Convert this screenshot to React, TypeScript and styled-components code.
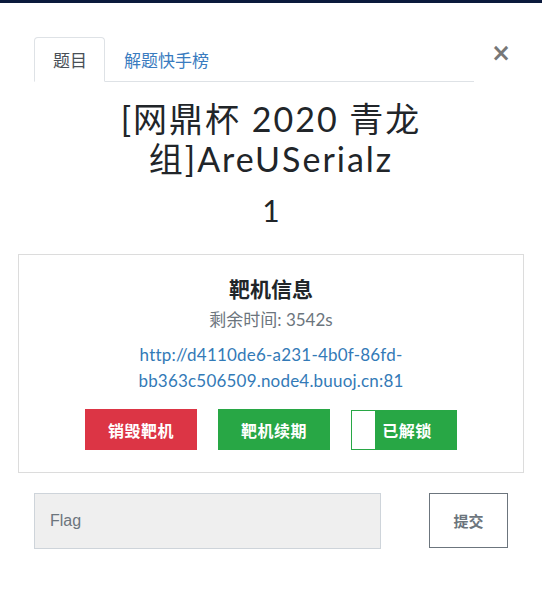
import React from "react";
import styled, { createGlobalStyle } from "styled-components";

const Global = createGlobalStyle`
  html, body { margin: 0; padding: 0; background: #fff; }
  body { font-family: Lato, "Noto Sans CJK SC", sans-serif; color: #212529; }
  * { box-sizing: border-box; }
`;

const TopStrip = styled.div`
  height: 3px;
  background: #0b1a3c;
`;

const Modal = styled.div`
  padding: 34px 18px 40px;
`;

const Header = styled.div`
  display: flex;
  align-items: flex-start;
  padding-left: 16px;
`;

const TabList = styled.div`
  display: flex;
  width: 440px;
  border-bottom: 1px solid #dee2e6;
`;

const Tab = styled.div<{ $active?: boolean }>`
  height: 45px;
  margin-bottom: -1px;
  padding: 0 17px 0 18px;
  display: flex;
  align-items: center;
  font-family: "Noto Sans CJK SC", sans-serif;
  font-size: 17px;
  color: ${(p) => (p.$active ? "#495057" : "#3a7cc0")};
  background: ${(p) => (p.$active ? "#fff" : "transparent")};
  border: 1px solid ${(p) => (p.$active ? "#dee2e6" : "transparent")};
  border-bottom-color: ${(p) => (p.$active ? "#fff" : "transparent")};
  border-radius: 4px 4px 0 0;
`;

const Close = styled.div`
  margin-left: 17px;
  margin-top: 2px;
  font-family: "DejaVu Sans", sans-serif;
  font-size: 24px;
  font-weight: bold;
  color: #777;
  line-height: 28px;
`;

const Title = styled.h3`
  margin: 17px 30px 0;
  text-align: center;
  font-family: Lato, "Noto Sans CJK SC", sans-serif;
  font-weight: 400;
  font-size: 34px;
  line-height: 40px;
  letter-spacing: 2px;
  color: #212529;
`;

const Score = styled.h4`
  margin: 11px 0 0;
  text-align: center;
  font-family: Lato, sans-serif;
  font-weight: 400;
  font-size: 30px;
  line-height: 40px;
  color: #212529;
`;

const Card = styled.div`
  margin-top: 24px;
  border: 1px solid #dcdcdc;
  padding: 20px 16px 22px;
  display: flex;
  flex-direction: column;
  align-items: center;
`;

const CardTitle = styled.div`
  font-family: Lato, "Noto Sans CJK SC", sans-serif;
  font-weight: 700;
  font-size: 21px;
  line-height: 28px;
  color: #212529;
`;

const Timer = styled.div`
  font-size: 17px;
  line-height: 24px;
  color: #6c757d;
  margin-top: 5px;
`;

const Link = styled.a`
  margin-top: 10px;
  display: block;
  width: 300px;
  text-align: center;
  font-size: 17px;
  line-height: 26px;
  letter-spacing: 0.2px;
  color: #337ab7;
  text-decoration: none;
`;

const Buttons = styled.div`
  margin-top: 15px;
  display: flex;
  align-items: center;
  gap: 21px;
`;

const Btn = styled.button<{ $color: string }>`
  height: 41px;
  width: 112px;
  border: none;
  background: ${(p) => p.$color};
  color: #fff;
  font-family: "Noto Sans CJK SC", sans-serif;
  font-weight: 700;
  font-size: 16px;
  letter-spacing: 0.5px;
  padding: 0;
`;

const Toggle = styled.div`
  position: relative;
  height: 40px;
  width: 106px;
  border: 1px solid #28a745;
  background: #28a745;
  display: flex;
  align-items: center;
  justify-content: center;
`;

const Knob = styled.div`
  position: absolute;
  left: 0;
  top: 0;
  bottom: 0;
  width: 23px;
  background: #fff;
`;

const ToggleLabel = styled.span`
  padding-left: 6px;
  color: #fff;
  font-family: "Noto Sans CJK SC", sans-serif;
  font-weight: 700;
  font-size: 16px;
  letter-spacing: 0.5px;
`;

const FlagRow = styled.div`
  margin-top: 20px;
  padding: 0 16px;
  display: flex;
  align-items: flex-start;
`;

const FlagInput = styled.input`
  width: 347px;
  height: 56px;
  background: #efefef;
  border: 1px solid #ced4da;
  padding: 0 15px;
  font-family: "Liberation Sans", Arial, sans-serif;
  font-size: 16px;
  color: #495057;
  outline: none;
  &::placeholder { color: #6c757d; }
`;

const Submit = styled.button`
  margin-left: auto;
  width: 79px;
  height: 55px;
  background: #fff;
  border: 1px solid #6c757d;
  color: #6c757d;
  font-family: "Noto Sans CJK SC", sans-serif;
  font-weight: 700;
  font-size: 15px;
  padding: 0;
`;

export default function App() {
  return (
    <>
      <Global />
      <TopStrip />
      <Modal>
        <Header>
          <TabList>
            <Tab $active>题目</Tab>
            <Tab>解题快手榜</Tab>
          </TabList>
          <Close>×</Close>
        </Header>
        <Title>[网鼎杯 2020 青龙组]AreUSerialz</Title>
        <Score>1</Score>
        <Card>
          <CardTitle>靶机信息</CardTitle>
          <Timer>剩余时间: 3542s</Timer>
          <Link href="#">http://d4110de6-a231-4b0f-86fd-bb363c506509.node4.buuoj.cn:81</Link>
          <Buttons>
            <Btn $color="#dc3545">销毁靶机</Btn>
            <Btn $color="#28a745">靶机续期</Btn>
            <Toggle>
              <Knob />
              <ToggleLabel>已解锁</ToggleLabel>
            </Toggle>
          </Buttons>
        </Card>
        <FlagRow>
          <FlagInput placeholder="Flag" />
          <Submit>提交</Submit>
        </FlagRow>
      </Modal>
    </>
  );
}
